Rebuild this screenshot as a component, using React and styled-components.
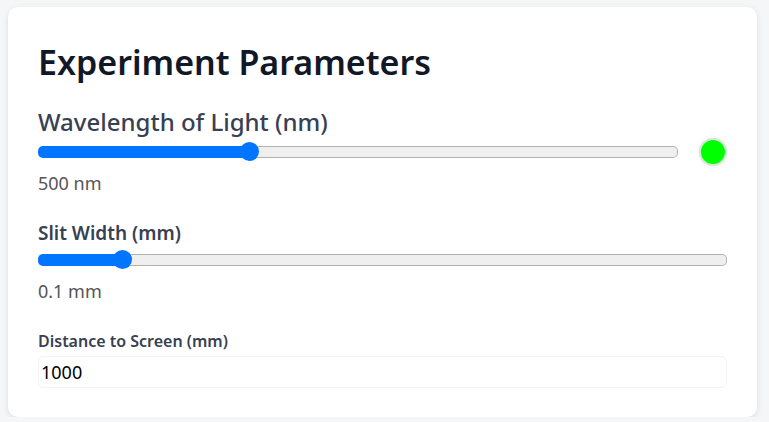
import React, { useState } from 'react'
import styled, { createGlobalStyle } from 'styled-components'

const GlobalStyle = createGlobalStyle`
  body {
    margin: 0;
    background: #f5f6f8;
    font-family: "Noto Sans", "Open Sans", sans-serif;
  }
`

const Page = styled.div`
  padding: 7px 12px 0 8px;
`

const Card = styled.section`
  background: #fff;
  border-radius: 10px;
  box-shadow: 0 2px 6px rgba(0, 0, 0, 0.1);
  padding: 32px 30px 29px 30px;
`

const Title = styled.h2`
  margin: 0 0 20px;
  font-size: 34px;
  font-weight: 600;
  color: #111827;
`

const Field = styled.div`
  margin-bottom: ${p => p.gap ?? 25}px;
`

const Label = styled.label`
  display: block;
  font-size: ${p => p.size}px;
  font-weight: ${p => p.weight || 600};
  color: #374151;
  margin-bottom: ${p => p.space || 0}px;
`

const SliderRow = styled.div`
  display: flex;
  align-items: center;
  gap: 21px;
  height: 27px;
`

const Range = styled.input`
  -webkit-appearance: none;
  appearance: none;
  flex: 1;
  min-width: 0;
  margin: 0;
  padding: 1px;
  height: 10px;
  border-radius: 5px;
  background:
    linear-gradient(#0075ff, #0075ff) 0 0 / var(--fill) 100% no-repeat border-box,
    linear-gradient(#efefef, #efefef) content-box,
    linear-gradient(#b2b2b2, #b2b2b2) border-box;
  outline: none;

  &::-webkit-slider-thumb {
    -webkit-appearance: none;
    appearance: none;
    width: 19px;
    height: 19px;
    border-radius: 50%;
    background: #0075ff;
    border: none;
  }
`

const Swatch = styled.span`
  width: 24px;
  height: 24px;
  border-radius: 50%;
  background: ${p => p.color};
  border: 2px solid #d3e8d3;
  box-shadow: 0 0 4px rgba(0, 0, 0, 0.08);
  flex-shrink: 0;
`

const Value = styled.div`
  margin-top: 6px;
  font-size: 18px;
  color: #555;
`

const NumberInput = styled.input`
  display: block;
  width: 100%;
  box-sizing: border-box;
  font-family: "Noto Sans", "Open Sans", sans-serif;
  font-size: 18px;
  color: #000;
  padding: 3px 2px;
  border: 1px solid #f3f3f3;
  border-radius: 6px;
  outline: none;
`

function Slider({ min, max, step, value, onChange }) {
  const frac = (value - min) / (max - min)
  return (
    <Range
      type="range"
      min={min}
      max={max}
      step={step}
      value={value}
      onChange={e => onChange(Number(e.target.value))}
      style={{ '--fill': `calc(9px + ${frac} * (100% - 19px))` }}
    />
  )
}

export default function App() {
  const [wavelength, setWavelength] = useState(500)
  const [slit, setSlit] = useState(0.1)
  const [distance, setDistance] = useState(1000)

  return (
    <>
      <GlobalStyle />
      <Page>
        <Card>
          <Title>Experiment Parameters</Title>
          <Field>
            <Label size={24} weight={500}>Wavelength of Light (nm)</Label>
            <SliderRow>
              <Slider min={380} max={750} step={1} value={wavelength} onChange={setWavelength} />
              <Swatch color="#00ff00" />
            </SliderRow>
            <Value>{wavelength} nm</Value>
          </Field>
          <Field gap={27}>
            <Label size={19}>Slit Width (mm)</Label>
            <SliderRow>
              <Slider min={0.05} max={0.5} step={0.01} value={slit} onChange={setSlit} />
            </SliderRow>
            <Value>{slit} mm</Value>
          </Field>
          <Field gap={0}>
            <Label size={16} space={4}>Distance to Screen (mm)</Label>
            <NumberInput
              type="number"
              value={distance}
              onChange={e => setDistance(e.target.value)}
            />
          </Field>
        </Card>
      </Page>
    </>
  )
}
